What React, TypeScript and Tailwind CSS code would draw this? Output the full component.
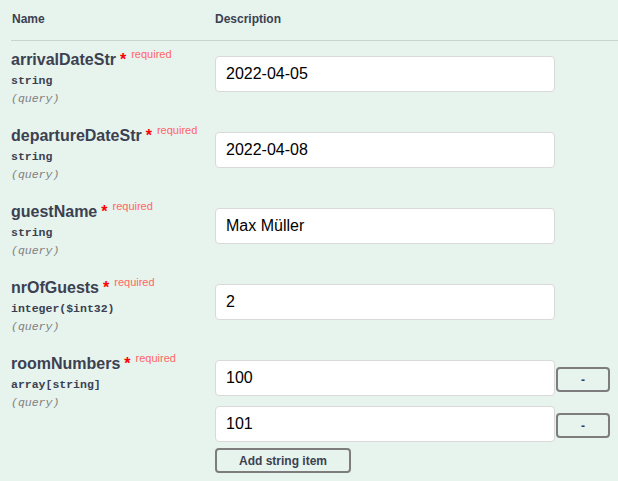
import React from 'react';

interface Param {
  name: string;
  type: string;
  values: string[];
  isArray?: boolean;
}

const params: Param[] = [
  { name: 'arrivalDateStr', type: 'string', values: ['2022-04-05'] },
  { name: 'departureDateStr', type: 'string', values: ['2022-04-08'] },
  { name: 'guestName', type: 'string', values: ['Max Müller'] },
  { name: 'nrOfGuests', type: 'integer($int32)', values: ['2'] },
  { name: 'roomNumbers', type: 'array[string]', values: ['100', '101'], isArray: true },
];

const sans = { fontFamily: '"Liberation Sans", Arial, sans-serif' };
const mono = { fontFamily: '"Liberation Mono", "Courier New", monospace' };

export default function App() {
  return (
    <div className="min-h-screen bg-[#e7f3ed] text-[#3b4151]" style={sans}>
      {/* Header */}
      <div className="ml-[11px] flex h-[41px] border-b border-[#c8d2ce] pt-[12px] text-[12px] font-bold leading-[14px]">
        <div className="w-[204px] pl-[1px]">Name</div>
        <div>Description</div>
      </div>

      {/* Rows */}
      {params.map((p) => (
        <div key={p.name} className="flex pl-[11px] pt-[10px] pb-[10px]">
          <div className="w-[204px] shrink-0">
            <div className="flex items-start text-[16px] font-bold leading-[18px]">
              <span>{p.name}</span>
              <span className="ml-[4px] text-[16px] text-[#ff0000]">*</span>
              <span className="relative -top-[3px] ml-[5px] text-[11px] font-normal leading-[12px] text-[#ff6666]">
                required
              </span>
            </div>
            <div className="mt-[4px] text-[11.5px] font-semibold leading-[16px]" style={mono}>
              {p.type}
            </div>
            <div className="mt-[2px] text-[11.5px] italic leading-[16px] text-[#808080]" style={mono}>
              (query)
            </div>
          </div>

          <div className="flex flex-col">
            {p.values.map((v, i) => (
              <div key={i} className="flex items-start">
                <input
                  readOnly
                  value={v}
                  className="my-[5px] h-[36px] w-[340px] rounded-[4px] border border-[#d9d9d9] bg-white px-[10px] text-[16px] text-black outline-none"
                  style={sans}
                />
                {p.isArray && (
                  <button className="mt-[12px] ml-[1px] h-[25px] w-[54px] rounded-[4px] border-2 border-[#7d7d7d] text-[12px] font-bold leading-none text-[#3b4151]">
                    -
                  </button>
                )}
              </div>
            ))}
            {p.isArray && (
              <button className="mt-[1px] h-[25px] w-[136px] rounded-[4px] border-2 border-[#7d7d7d] text-[12px] font-bold leading-none text-[#3b4151]">
                Add string item
              </button>
            )}
          </div>
        </div>
      ))}
    </div>
  );
}
